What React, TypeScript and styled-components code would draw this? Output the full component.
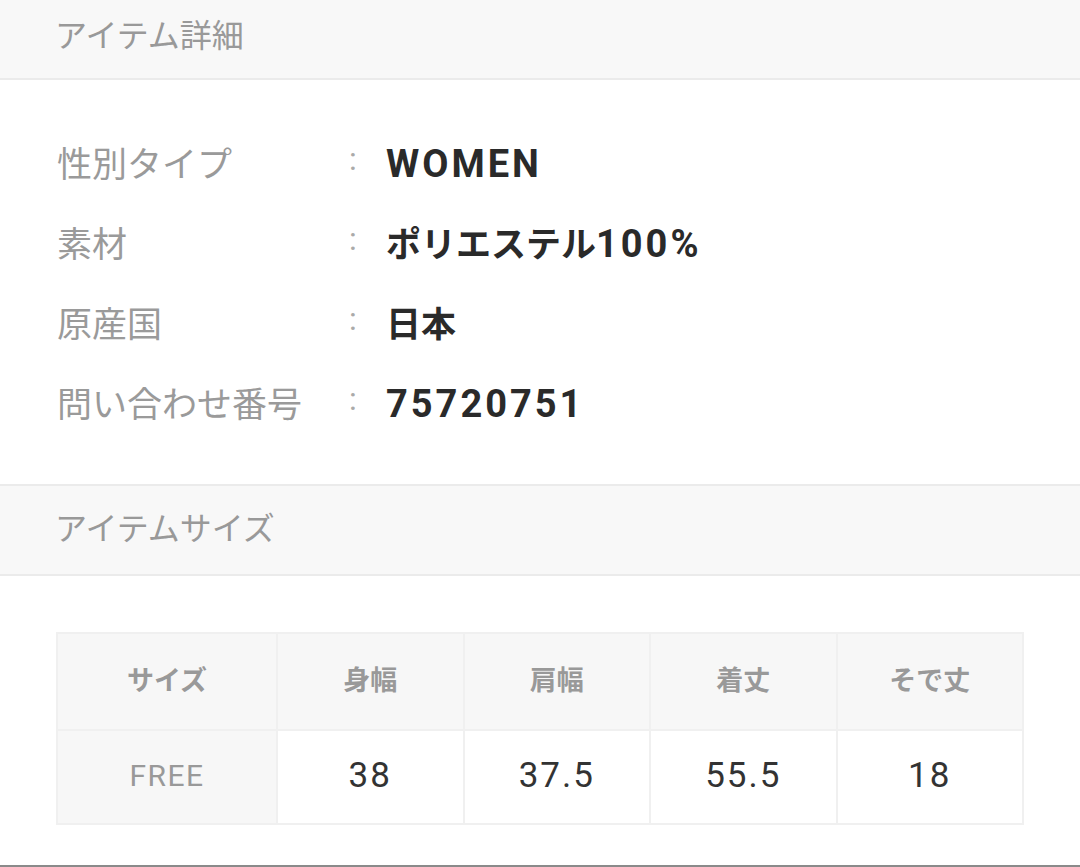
import styled, { createGlobalStyle } from 'styled-components'

const GlobalStyle = createGlobalStyle`
  html, body {
    margin: 0;
    padding: 0;
    background: #fff;
    font-family: "Roboto", "Noto Sans CJK JP", sans-serif;
  }
`

const details = [
  { label: '性別タイプ', value: 'WOMEN' },
  { label: '素材', value: 'ポリエステル100%' },
  { label: '原産国', value: '日本' },
  { label: '問い合わせ番号', value: '75720751' },
]

const sizeHeads = ['サイズ', '身幅', '肩幅', '着丈', 'そで丈']
const sizeRow = ['FREE', '38', '37.5', '55.5', '18']

// latin runs get a larger face so they match the wide glyphs of the original
function splitLatin(text: string) {
  return text.split(/([A-Za-z0-9%.]+)/).filter(Boolean).map((part, i) =>
    /^[A-Za-z0-9%.]+$/.test(part) ? <Latin key={i}>{part}</Latin> : <span key={i}>{part}</span>
  )
}

function App() {
  return (
    <Page>
      <GlobalStyle />
      <SectionHead>アイテム詳細</SectionHead>
      <DetailList>
        {details.map((d) => (
          <DetailRow key={d.label}>
            <Label>{d.label}</Label>
            <Colon>:</Colon>
            <Value>{splitLatin(d.value)}</Value>
          </DetailRow>
        ))}
      </DetailList>
      <SectionHead $bordered>アイテムサイズ</SectionHead>
      <TableWrap>
        <SizeTable>
          <thead>
            <tr>
              {sizeHeads.map((h) => (
                <Th key={h}>{h}</Th>
              ))}
            </tr>
          </thead>
          <tbody>
            <tr>
              {sizeRow.map((v, i) => (
                <Td key={i} $first={i === 0}>
                  {v}
                </Td>
              ))}
            </tr>
          </tbody>
        </SizeTable>
      </TableWrap>
    </Page>
  )
}

const Page = styled.div`
  width: 1080px;
  height: 867px;
  box-sizing: border-box;
  border-bottom: 2px solid #8a8a8a;
  overflow: hidden;
`

const SectionHead = styled.div<{ $bordered?: boolean }>`
  height: 80px;
  box-sizing: border-box;
  display: flex;
  align-items: center;
  padding: 0 55px 12px;
  background: #f8f8f8;
  border-top: ${(p) => (p.$bordered ? '2px solid #ebebeb' : 'none')};
  border-bottom: 2px solid #ebebeb;
  ${(p) => p.$bordered && 'height: 92px; padding-bottom: 8px;'}
  color: #999;
  font-size: 32px;
  font-family: "Noto Sans CJK JP", sans-serif;
`

const DetailList = styled.div`
  padding: 41px 57px 43px;
  display: flex;
  flex-direction: column;
`

const DetailRow = styled.div`
  height: 80px;
  display: flex;
  align-items: center;
`

const Label = styled.div`
  width: 292px;
  color: #9a9a9a;
  font-size: 35px;
  font-family: "Noto Sans CJK JP", sans-serif;
`

const Colon = styled.div`
  width: 37px;
  color: #aaa;
  font-size: 32px;
  padding-bottom: 4px;
`

const Value = styled.div`
  color: #2a2a2a;
  font-size: 35px;
  font-weight: 700;
  font-family: "Noto Sans CJK JP", sans-serif;
`

const Latin = styled.span`
  font-family: "Roboto", sans-serif;
  font-size: 38px;
  letter-spacing: 3px;
`

const TableWrap = styled.div`
  padding: 56px 56px 0;
`

const SizeTable = styled.table`
  width: 968px;
  border-collapse: collapse;
  table-layout: fixed;
  border: 2px solid #f0f0f0;
  th:first-child,
  td:first-child {
    width: 218px;
  }
`

const Th = styled.th`
  height: 89px;
  background: #f7f7f7;
  border: 2px solid #f0f0f0;
  color: #999;
  font-size: 27px;
  font-weight: 700;
  font-family: "Noto Sans CJK JP", sans-serif;
  text-align: center;
  padding: 0 0 6px;
`

const Td = styled.td<{ $first?: boolean }>`
  height: 88px;
  background: ${(p) => (p.$first ? '#f7f7f7' : '#fff')};
  border: 2px solid #f0f0f0;
  color: ${(p) => (p.$first ? '#999' : '#333')};
  font-size: ${(p) => (p.$first ? '30px' : '35px')};
  letter-spacing: ${(p) => (p.$first ? '1.5px' : '2px')};
  text-align: center;
  padding: 0 0 4px;
`

export default App
